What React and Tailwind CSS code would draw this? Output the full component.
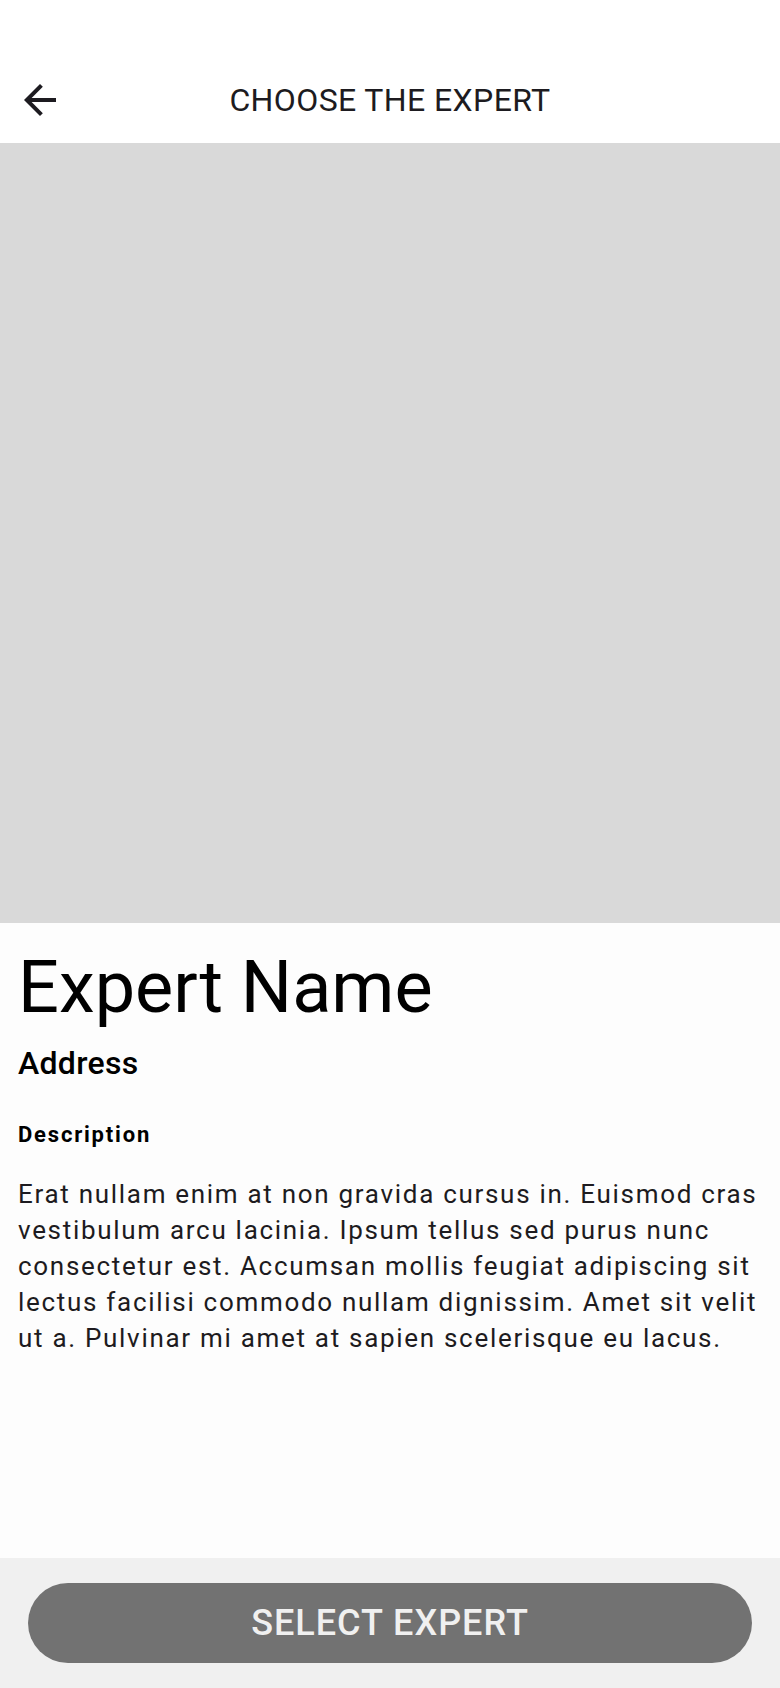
import React from 'react';

const BackArrow = () => (
  <svg width="48" height="48" viewBox="0 0 24 24" fill="#1d1b20" aria-hidden="true">
    <path d="M20 11H7.83l5.59-5.59L12 4l-8 8 8 8 1.41-1.41L7.83 13H20v-2z" />
  </svg>
);

const App = () => {
  return (
    <div
      className="flex flex-col w-[780px] h-[1688px] bg-[#fdfdfd] overflow-hidden"
      style={{ fontFamily: 'Roboto, "Noto Sans", sans-serif' }}
    >
      {/* Top bar */}
      <header className="h-[143px] bg-white pt-[56px] shrink-0">
        <div className="relative flex items-center justify-center h-[87px]">
          <button className="absolute left-[16px] top-1/2 -translate-y-1/2 flex items-center justify-center">
            <BackArrow />
          </button>
          <h1 className="text-[32px] text-[#1d1b20] tracking-[0.4px]">CHOOSE THE EXPERT</h1>
        </div>
      </header>

      {/* Photo placeholder */}
      <div className="h-[780px] bg-[#d9d9d9] shrink-0" />

      {/* Details */}
      <main className="flex-1 px-[18px] pt-[23px]">
        <h2 className="text-[72px] leading-[84px] text-black">Expert Name</h2>
        <p className="mt-[14px] text-[32px] leading-[38px] font-medium tracking-[0.3px] text-black">Address</p>
        <p className="mt-[40px] text-[22px] leading-[26px] font-bold tracking-[1.8px] text-black">Description</p>
        <p className="mt-[28px] text-[26px] leading-[36px] tracking-[1.7px] text-[#1d1b20]">
          Erat nullam enim at non gravida cursus in. Euismod cras vestibulum arcu lacinia. Ipsum
          tellus sed purus nunc consectetur est. Accumsan mollis feugiat adipiscing sit lectus
          facilisi commodo nullam dignissim. Amet sit velit ut a. Pulvinar mi amet at sapien
          scelerisque eu lacus.
        </p>
      </main>

      {/* Bottom action */}
      <footer className="h-[130px] bg-[#f0f0f0] px-[28px] flex items-center shrink-0">
        <button className="w-full h-[80px] rounded-full bg-[#727272] text-[#f0f0f0] text-[36px] font-medium tracking-[1px]">
          SELECT EXPERT
        </button>
      </footer>
    </div>
  );
};

export default App;
